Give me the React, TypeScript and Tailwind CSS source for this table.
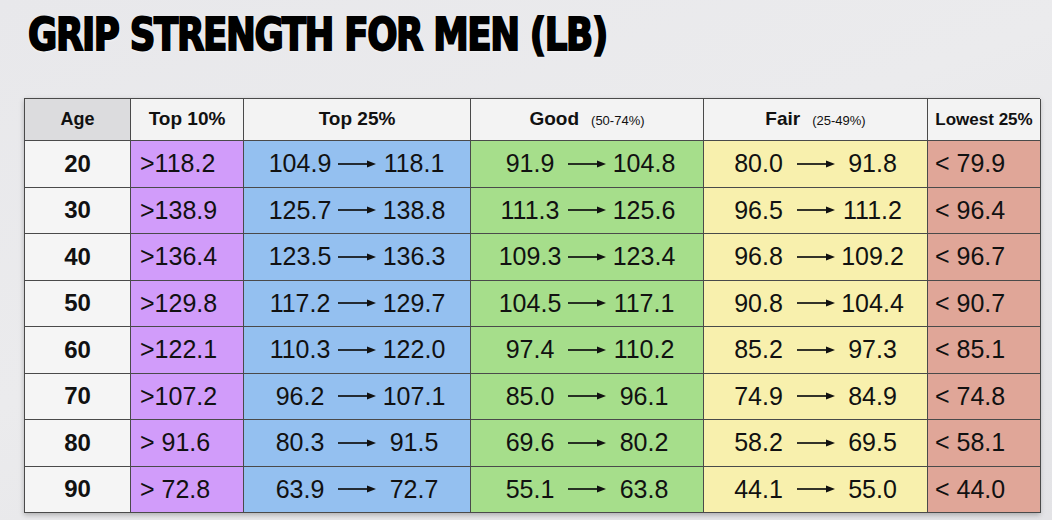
import React from "react";

type Row = {
  age: string;
  top10: string;
  top25: [string, string];
  good: [string, string];
  fair: [string, string];
  low: string;
};

const rows: Row[] = [
  { age: "20", top10: ">118.2", top25: ["104.9", "118.1"], good: ["91.9", "104.8"], fair: ["80.0", "91.8"], low: "< 79.9" },
  { age: "30", top10: ">138.9", top25: ["125.7", "138.8"], good: ["111.3", "125.6"], fair: ["96.5", "111.2"], low: "< 96.4" },
  { age: "40", top10: ">136.4", top25: ["123.5", "136.3"], good: ["109.3", "123.4"], fair: ["96.8", "109.2"], low: "< 96.7" },
  { age: "50", top10: ">129.8", top25: ["117.2", "129.7"], good: ["104.5", "117.1"], fair: ["90.8", "104.4"], low: "< 90.7" },
  { age: "60", top10: ">122.1", top25: ["110.3", "122.0"], good: ["97.4", "110.2"], fair: ["85.2", "97.3"], low: "< 85.1" },
  { age: "70", top10: ">107.2", top25: ["96.2", "107.1"], good: ["85.0", "96.1"], fair: ["74.9", "84.9"], low: "< 74.8" },
  { age: "80", top10: "> 91.6", top25: ["80.3", "91.5"], good: ["69.6", "80.2"], fair: ["58.2", "69.5"], low: "< 58.1" },
  { age: "90", top10: "> 72.8", top25: ["63.9", "72.7"], good: ["55.1", "63.8"], fair: ["44.1", "55.0"], low: "< 44.0" },
];

function Arrow() {
  return (
    <svg width="38" height="10" viewBox="0 0 38 10" className="mx-[3px] shrink-0">
      <line x1="0" y1="5" x2="31" y2="5" stroke="#111" strokeWidth="1.7" />
      <polygon points="29,1.5 38,5 29,8.5" fill="#111" />
    </svg>
  );
}

function Range({ value }: { value: [string, string] }) {
  return (
    <div className="flex items-center justify-center">
      <span className="w-[70px] text-center">{value[0]}</span>
      <Arrow />
      <span className="w-[70px] text-center">{value[1]}</span>
    </div>
  );
}

const cell = "flex items-center border-r border-b border-[#4a4a4a]";

export default function App() {
  return (
    <div className="w-[1052px] h-[520px] overflow-hidden bg-[linear-gradient(160deg,#e8e8eb_0%,#ebebed_45%,#e3e3e6_100%)] font-['Liberation_Sans',Arial,sans-serif] text-[#111]">
      {/* Title */}
      <div className="h-[98px] pl-[28px] pt-[9px]">
        <h1 className="inline-block origin-left scale-x-[0.9] whitespace-nowrap font-['DejaVu_Sans_Condensed','DejaVu_Sans',sans-serif] font-bold text-[44px] leading-[52px] tracking-[-1.5px] text-black [-webkit-text-stroke:1.8px_black] [text-shadow:0_1px_3px_rgba(255,255,255,0.95)]">
          GRIP STRENGTH FOR MEN (LB)
        </h1>
      </div>

      {/* Table */}
      <div className="ml-[24px] w-[1016px] grid grid-cols-[106px_113px_227px_233px_224px_113px] grid-rows-[42px_repeat(8,46.5px)] border-l border-t border-[#4a4a4a] shadow-[0_2px_5px_rgba(0,0,0,0.25)]">
        <div className={`${cell} justify-center bg-[#dcdcde] text-[18px] font-bold`}>Age</div>
        <div className={`${cell} justify-center bg-[#f3f3f3] text-[19px] font-bold`}>Top 10%</div>
        <div className={`${cell} justify-center bg-[#f3f3f3] text-[19px] font-bold`}>Top 25%</div>
        <div className={`${cell} justify-center bg-[#f3f3f3]`}>
          <div className="flex items-baseline">
            <span className="text-[19px] font-bold">Good</span>
            <span className="ml-[12px] text-[13px]">(50-74%)</span>
          </div>
        </div>
        <div className={`${cell} justify-center bg-[#f3f3f3]`}>
          <div className="flex items-baseline">
            <span className="text-[19px] font-bold">Fair</span>
            <span className="ml-[12px] text-[13px]">(25-49%)</span>
          </div>
        </div>
        <div className={`${cell} justify-center bg-[#f3f3f3] text-[17px] font-bold`}>Lowest 25%</div>

        {rows.map((r) => (
          <React.Fragment key={r.age}>
            <div className={`${cell} justify-center bg-[#f5f5f5] text-[24px] font-bold`}>{r.age}</div>
            <div className={`${cell} pl-[9px] bg-[#d19cfa] text-[25px]`}>{r.top10}</div>
            <div className={`${cell} justify-center bg-[#94c0f0] text-[25px]`}>
              <Range value={r.top25} />
            </div>
            <div className={`${cell} justify-center bg-[#a6de8b] text-[25px]`}>
              <Range value={r.good} />
            </div>
            <div className={`${cell} justify-center bg-[#f8f0ad] text-[25px]`}>
              <Range value={r.fair} />
            </div>
            <div className={`${cell} pl-[7px] bg-[#e0a698] text-[25px]`}>{r.low}</div>
          </React.Fragment>
        ))}
      </div>
    </div>
  );
}
